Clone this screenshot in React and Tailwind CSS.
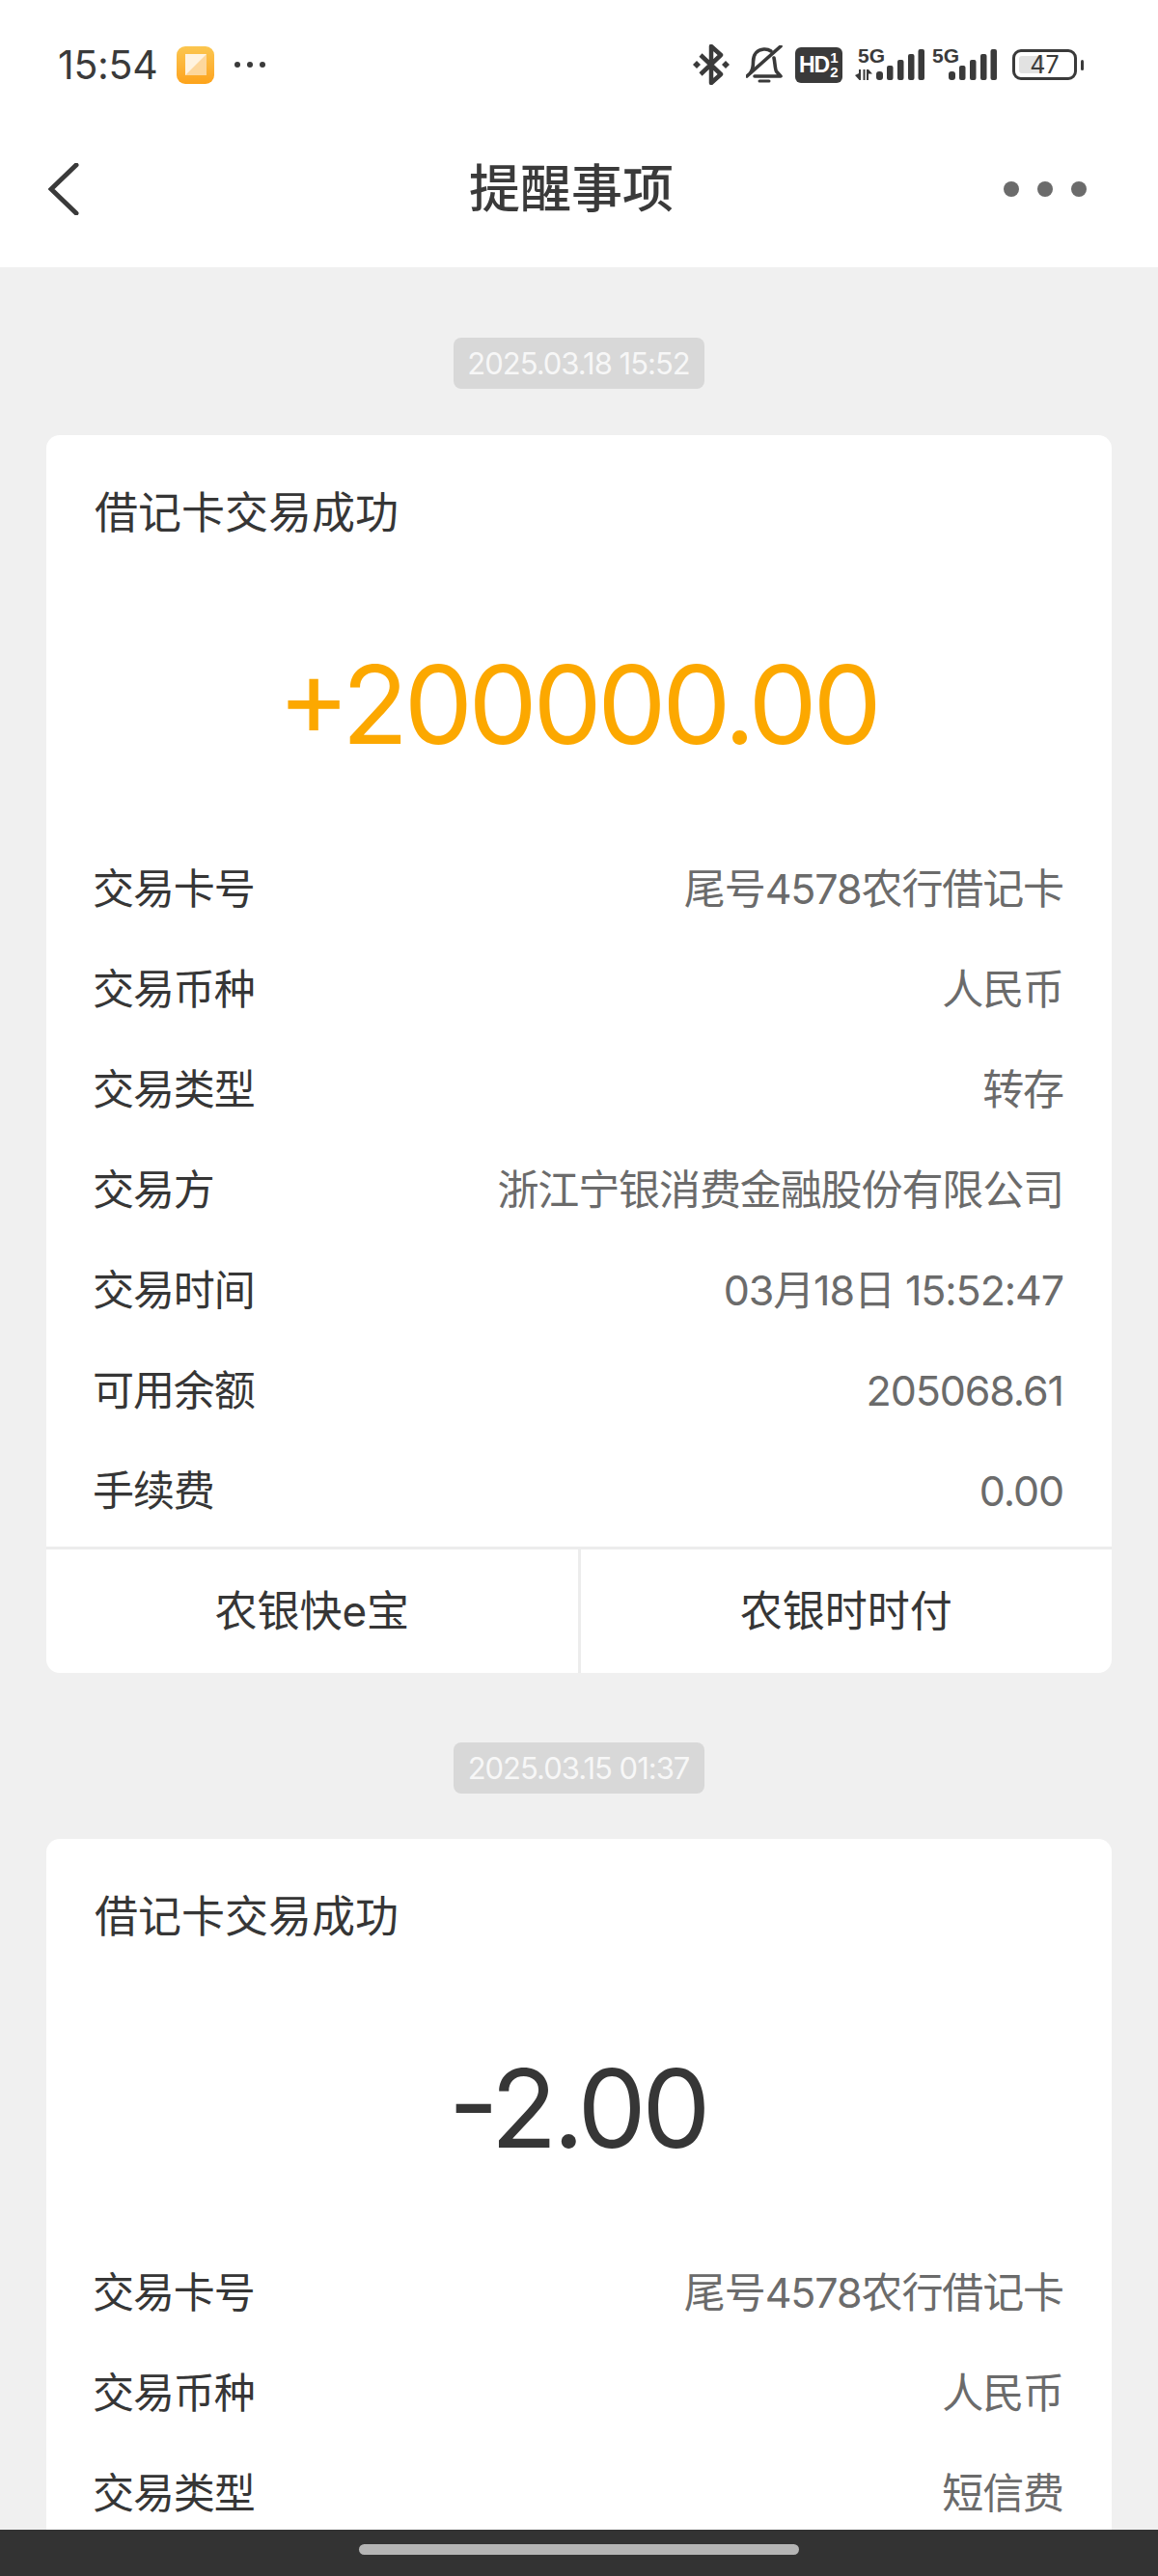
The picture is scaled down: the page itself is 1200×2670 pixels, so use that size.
const rowsA = [
  ["交易卡号", "尾号4578农行借记卡"],
  ["交易币种", "人民币"],
  ["交易类型", "转存"],
  ["交易方", "浙江宁银消费金融股份有限公司"],
  ["交易时间", "03月18日 15:52:47"],
  ["可用余额", "205068.61"],
  ["手续费", "0.00"],
];
const rowsB = [
  ["交易卡号", "尾号4578农行借记卡"],
  ["交易币种", "人民币"],
  ["交易类型", "短信费"],
];

function Bars({ className }) {
  return (
    <svg viewBox="0 0 50 32" className={className} fill="#3a3a3a">
      <rect x="0" y="23" width="7" height="9" rx="3" />
      <rect x="11" y="17" width="6.5" height="15" rx="2" />
      <rect x="22" y="11" width="6.5" height="21" rx="2" />
      <rect x="33" y="5" width="6.5" height="27" rx="2" />
      <rect x="43.5" y="0" width="6.5" height="32" rx="2" />
    </svg>
  );
}

function StatusBar() {
  return (
    <div className="flex h-[134px] items-center justify-between pl-[60px] pr-[77px] text-[#3a3a3a]">
      <div className="flex items-center">
        <span className="text-[41px] leading-none tracking-[-0.3px]">15:54</span>
        <div className="ml-[20px] flex h-[39px] w-[39px] items-center justify-center rounded-[9px] bg-gradient-to-b from-[#fbc64f] to-[#fda319]">
          <svg viewBox="0 0 24 24" className="h-[24px] w-[24px]">
            <path d="M1 1H23V23H1Z" fill="#fdd79c" />
            <path d="M1 1H23L1 23Z" fill="#fff3e0" />
          </svg>
        </div>
        <svg viewBox="0 0 32 8" className="ml-[21px] h-[8px] w-[32px]" fill="#3a3a3a">
          <circle cx="3" cy="4" r="3" />
          <circle cx="16" cy="4" r="3" />
          <circle cx="29" cy="4" r="3" />
        </svg>
      </div>
      <div className="flex items-center">
        <svg viewBox="0 0 38 42" className="h-[42px] w-[38px]" fill="none" stroke="#3a3a3a">
          <path d="M8 11 L29 31 L19 40 V2 L29 11 L8 31" strokeWidth="4.5" strokeLinejoin="round" />
          <path d="M0 21 L4 17 L8 21 L4 25Z M30 21 L34 17 L38 21 L34 25Z" fill="#3a3a3a" strokeWidth="0" />
        </svg>
        <svg viewBox="0 0 38 40" className="ml-[17px] h-[40px] w-[38px]" fill="none" stroke="#3a3a3a" strokeWidth="3.6" strokeLinecap="round" strokeLinejoin="round">
          <path d="M1 32 L36 1" />
          <path d="M5 28 C7 25 7.5 23 7.5 17 C7.5 9 12 4.5 18.5 4 C21 3.8 24 4.6 26 6" />
          <path d="M29 13 C30 17 30 24 31.5 27 L36 32 H9" />
          <path d="M14 37 H24" strokeWidth="3" />
        </svg>
        <div className="relative ml-[13px] flex h-[37px] w-[49px] items-center rounded-[6px] bg-[#3a3a3a] pl-[4px] font-['Liberation_Sans',sans-serif] font-bold text-white">
          <span className="text-[23px] leading-none tracking-[-1px]">HD</span>
          <span className="ml-[1px] flex flex-col text-[15px] leading-[15px]">
            <span>1</span>
            <span>2</span>
          </span>
        </div>
        <div className="relative ml-[13px] h-[36px] w-[72px]">
          <span className="absolute left-[3px] top-[-2px] font-['Liberation_Sans',sans-serif] text-[21px] font-bold leading-none">5G</span>
          <svg viewBox="0 0 19 11" className="absolute left-0 top-[23px] h-[11px] w-[19px]" fill="#3a3a3a">
            <path d="M6 0V11H4.5L0 6 4 4V0Z" />
            <path d="M8.5 0H10.5V11H8.5Z" />
            <path d="M12 0H14L18 4.5H14V11H12Z" />
          </svg>
          <Bars className="absolute left-[22px] top-[2px] h-[32px] w-[50px]" />
        </div>
        <div className="relative ml-[8px] h-[36px] w-[68px]">
          <span className="absolute left-0 top-[-2px] font-['Liberation_Sans',sans-serif] text-[21px] font-bold leading-none">5G</span>
          <Bars className="absolute left-[17px] top-[2px] h-[32px] w-[50px]" />
        </div>
        <div className="relative ml-[15px] flex h-[32px] w-[67px] items-center justify-center rounded-[9px] border-[3px] border-[#3a3a3a] p-[3px]">
          <div className="absolute left-[4px] top-[4px] bottom-[4px] w-[25px] rounded-[3px] bg-[#e2e2e2]" />
          <span className="relative text-[25px] leading-none">47</span>
        </div>
        <div className="ml-[4px] h-[11px] w-[3px] rounded-full bg-[#3a3a3a]" />
      </div>
    </div>
  );
}

function NavBar() {
  return (
    <div className="grid h-[143px] grid-cols-[1fr_auto_1fr] items-center pb-[19px] pl-[50px] pr-[66px]">
      <svg viewBox="0 0 32 54" className="h-[54px] w-[32px]" fill="none" stroke="#3a3a3a" strokeWidth="5" strokeLinecap="round" strokeLinejoin="miter">
        <path d="M29 2 L3 27 L29 52" />
      </svg>
      <h1 className="text-[53px] leading-none font-medium text-[#3a3a3a]">提醒事项</h1>
      <div className="mr-[8px] flex justify-end gap-[19px]">
        <div className="h-[16px] w-[16px] rounded-full bg-[#6b6b6b]" />
        <div className="h-[16px] w-[16px] rounded-full bg-[#6b6b6b]" />
        <div className="h-[16px] w-[16px] rounded-full bg-[#6b6b6b]" />
      </div>
    </div>
  );
}

function DatePill({ children }) {
  return (
    <div className="flex justify-center">
      <div className="flex h-[53px] w-[260px] items-center justify-center rounded-[8px] bg-[#d8d8d8] pr-[1px] text-[31px] leading-none tracking-[-1px] text-[#f7f7f7]">
        {children}
      </div>
    </div>
  );
}

function Row({ label, value }) {
  return (
    <div className="flex h-[104px] items-center justify-between pl-[48px] pr-[50px] text-[43px] leading-none tracking-[-1.1px]">
      <span className="text-[#363636]">{label}</span>
      <span className="text-[#6b6b6b]">{value}</span>
    </div>
  );
}

function Card({ amount, amountColor, rows, footer }) {
  return (
    <div className="overflow-hidden rounded-[14px] bg-white">
      <div className="flex h-[164px] items-center pb-[4px] pl-[50px] text-[45px] leading-none text-[#363636]">借记卡交易成功</div>
      <div className={amountColor + " flex h-[254px] items-center justify-center pb-[24px] pr-[3px] text-[113px] leading-none tracking-[-4.4px] [font-feature-settings:'case']"}>
        {amount}
      </div>
      {rows.map(([l, v]) => (
        <Row key={l} label={l} value={v} />
      ))}
      {footer && (
        <div className="mt-[6px] flex h-[131px] border-t-[3px] border-[#ececec] text-[44px] leading-none text-[#363636]">
          <div className="flex flex-1 items-center justify-center border-r-[3px] border-[#ececec] pb-[1px]">农银快e宝</div>
          <div className="flex flex-1 items-center justify-center pb-[1px]">农银时时付</div>
        </div>
      )}
    </div>
  );
}

export default function App() {
  return (
    <div className="flex h-[2670px] w-[1200px] flex-col overflow-hidden bg-[#f0f0f0] font-['Inter','Noto_Sans_CJK_SC',sans-serif]">
      <div className="bg-white">
        <StatusBar />
        <NavBar />
      </div>
      <div className="min-h-0 flex-1 overflow-hidden px-[48px] pt-[73px]">
        <DatePill>2025.03.18 15:52</DatePill>
        <div className="mt-[48px]">
          <Card amount="+200000.00" amountColor="text-[#fca800]" rows={rowsA} footer />
        </div>
        <div className="mt-[72px]">
          <DatePill>2025.03.15 01:37</DatePill>
        </div>
        <div className="mt-[47px]">
          <Card amount="-2.00" amountColor="text-[#363636]" rows={rowsB} />
        </div>
      </div>
      <div className="flex h-[48px] shrink-0 justify-center bg-[#333333] pt-[15px]">
        <div className="h-[11px] w-[456px] rounded-full bg-[#b5b5b5]" />
      </div>
    </div>
  );
}
